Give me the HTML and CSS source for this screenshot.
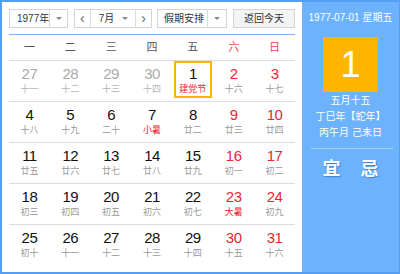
FILE: index.html
```html
<!DOCTYPE HTML>
<html>
<head>
    <meta charset="UTF-8">
    <title>万年历</title>
    <link rel="stylesheet" href="styles.css">
</head>
<body>
    <div id="calendar">
        <div class="main">
            <div class="toolbar">
                <div class="select year"><span class="val">1977年</span><span class="arrow"><i></i></span></div>
                <div class="month-group">
                    <span class="btn">&lsaquo;</span>
                    <span class="month"><span class="val">7月</span><i></i></span>
                    <span class="btn">&rsaquo;</span>
                </div>
                <div class="select holiday"><span class="val">假期安排</span><span class="arrow"><i></i></span></div>
                <div class="today-btn">返回今天</div>
            </div>
            <ul class="week">
                <li>一</li><li>二</li><li>三</li><li>四</li><li>五</li><li class="we">六</li><li class="we">日</li>
            </ul>
            <ul class="days">
                <li class="other"><div class="d"><b>27</b><span>十一</span></div></li>
                <li class="other"><div class="d"><b>28</b><span>十二</span></div></li>
                <li class="other"><div class="d"><b>29</b><span>十三</span></div></li>
                <li class="other"><div class="d"><b>30</b><span>十四</span></div></li>
                <li class="today"><div class="d"><b>1</b><span class="fes">建党节</span></div></li>
                <li class="we"><div class="d"><b>2</b><span>十六</span></div></li>
                <li class="we"><div class="d"><b>3</b><span>十七</span></div></li>

                <li><div class="d"><b>4</b><span>十八</span></div></li>
                <li><div class="d"><b>5</b><span>十九</span></div></li>
                <li><div class="d"><b>6</b><span>二十</span></div></li>
                <li><div class="d"><b>7</b><span class="fes">小暑</span></div></li>
                <li><div class="d"><b>8</b><span>廿二</span></div></li>
                <li class="we"><div class="d"><b>9</b><span>廿三</span></div></li>
                <li class="we"><div class="d"><b>10</b><span>廿四</span></div></li>

                <li><div class="d"><b>11</b><span>廿五</span></div></li>
                <li><div class="d"><b>12</b><span>廿六</span></div></li>
                <li><div class="d"><b>13</b><span>廿七</span></div></li>
                <li><div class="d"><b>14</b><span>廿八</span></div></li>
                <li><div class="d"><b>15</b><span>廿九</span></div></li>
                <li class="we"><div class="d"><b>16</b><span>初一</span></div></li>
                <li class="we"><div class="d"><b>17</b><span>初二</span></div></li>

                <li><div class="d"><b>18</b><span>初三</span></div></li>
                <li><div class="d"><b>19</b><span>初四</span></div></li>
                <li><div class="d"><b>20</b><span>初五</span></div></li>
                <li><div class="d"><b>21</b><span>初六</span></div></li>
                <li><div class="d"><b>22</b><span>初七</span></div></li>
                <li class="we"><div class="d"><b>23</b><span class="fes">大暑</span></div></li>
                <li class="we"><div class="d"><b>24</b><span>初九</span></div></li>

                <li><div class="d"><b>25</b><span>初十</span></div></li>
                <li><div class="d"><b>26</b><span>十一</span></div></li>
                <li><div class="d"><b>27</b><span>十二</span></div></li>
                <li><div class="d"><b>28</b><span>十三</span></div></li>
                <li><div class="d"><b>29</b><span>十四</span></div></li>
                <li class="we"><div class="d"><b>30</b><span>十五</span></div></li>
                <li class="we"><div class="d"><b>31</b><span>十六</span></div></li>
            </ul>
        </div>
        <div class="side">
            <p class="date">1977-07-01 星期五</p>
            <div class="big">1</div>
            <p class="lunar">五月十五</p>
            <p class="lunar">丁巳年【蛇年】</p>
            <p class="lunar">丙午月 己未日</p>
            <div class="line"></div>
            <p class="yiji"><span>宜</span><span>忌</span></p>
        </div>
    </div>
</body>
</html>
```

FILE: styles.css
```css
body{margin:0;font-family: "Liberation Sans","Noto Sans CJK SC",sans-serif;}
body,p,ul,li{margin:0;padding:0;list-style:none;}
b{font-weight:normal;}

#calendar{
    display: flex;
    width: 400px;
    height: 274px;
    box-sizing: border-box;
    border: 2px solid #559ff2;
    border-right-width: 1px;
    background: #fff;
}
#calendar .main{
    width: 300px;
    padding: 7px 7px 0 7px;
    box-sizing: border-box;
}

/* 顶部工具条 */
.toolbar{
    display: flex;
    height: 19px;
    padding-bottom: 6px;
    border-bottom: 1px solid #78b3f2;
    font-size: 10px;
    color: #333;
    white-space: nowrap;
}
.toolbar .select,
.toolbar .month-group,
.toolbar .today-btn{
    display: flex;
    box-sizing: border-box;
    height: 19px;
    border: 1px solid #d4d4d4;
    line-height: 17px;
}
.toolbar .year{
    width: 59px;
}
.toolbar .val{
    flex: 1;
    padding-left: 7px;
}
.toolbar .arrow{
    display: flex;
    align-items: center;
    justify-content: center;
    width: 18px;
    border-left: 1px solid #ddd;
}
.toolbar i{
    display: block;
    width: 0;
    height: 0;
    border: 3px solid transparent;
    border-top: 3px solid #888;
    border-bottom: 0;
}
.toolbar .month-group{
    width: 78px;
    margin-left: 6px;
}
.toolbar .btn{
    width: 15px;
    text-align: center;
    font-size: 14px;
    color: #666;
}
.toolbar .month{
    display: flex;
    align-items: center;
    width: 45px;
    border-left: 1px solid #ddd;
    border-right: 1px solid #ddd;
}
.toolbar .month .val{
    padding-left: 8px;
}
.toolbar .month i{
    margin-right: 7px;
}
.toolbar .holiday{
    width: 70px;
    margin-left: 5px;
}
.toolbar .holiday .val{
    padding-left: 6px;
}
.toolbar .today-btn{
    justify-content: center;
    width: 62px;
    margin-left: 6px;
    background: #f4f4f4;
}

/* 星期 */
.week,.days{
    display: grid;
    grid-template-columns: repeat(7,1fr);
}
.week li{
    height: 25px;
    line-height: 25px;
    text-align: center;
    font-size: 11px;
    color: #555;
}
.week li.we{
    color: #e74a4a;
}

/* 日期 */
.days li{
    height: 40px;
    border-top: 1px solid #dcdcdc;
}
.days .d{
    width: 38px;
    height: 37px;
    margin: 0 auto;
    padding-top: 2px;
    box-sizing: border-box;
    border: 2px solid transparent;
    text-align: center;
}
.days b{
    display: block;
    height: 18px;
    line-height: 18px;
    font-size: 15px;
    letter-spacing: -0.5px;
    color: #111;
}
.days span{
    display: block;
    line-height: 12px;
    font-size: 9px;
    color: #999;
}
.days li.we b{
    color: #e8282f;
}
.days li.other b{
    color: #aaa;
}
.days li.other span{
    color: #b5b5b5;
}
.days span.fes{
    color: #e8282f;
}
.days li.today .d{
    border-color: #ffb400;
}

/* 右侧 */
.side{
    flex: 1;
    padding-top: 9px;
    background: #6cb2fd;
    color: #fff;
    text-align: center;
}
.side .date{
    line-height: 14px;
    font-size: 10px;
}
.side .big{
    width: 55px;
    height: 55px;
    margin: 12px auto 1px;
    background: #ffb400;
    line-height: 55px;
    font-size: 36px;
}
.side .lunar{
    line-height: 16px;
    font-size: 10px;
}
.side .line{
    height: 1px;
    margin: 7px 6px 0 9px;
    background: rgba(255,255,255,.4);
}
.side .yiji{
    display: flex;
    justify-content: center;
    gap: 20px;
    margin-top: 8px;
    line-height: 24px;
    font-size: 18px;
    font-weight: bold;
    text-shadow: 1px 1px 1px rgba(30,80,150,.5);
}
```
